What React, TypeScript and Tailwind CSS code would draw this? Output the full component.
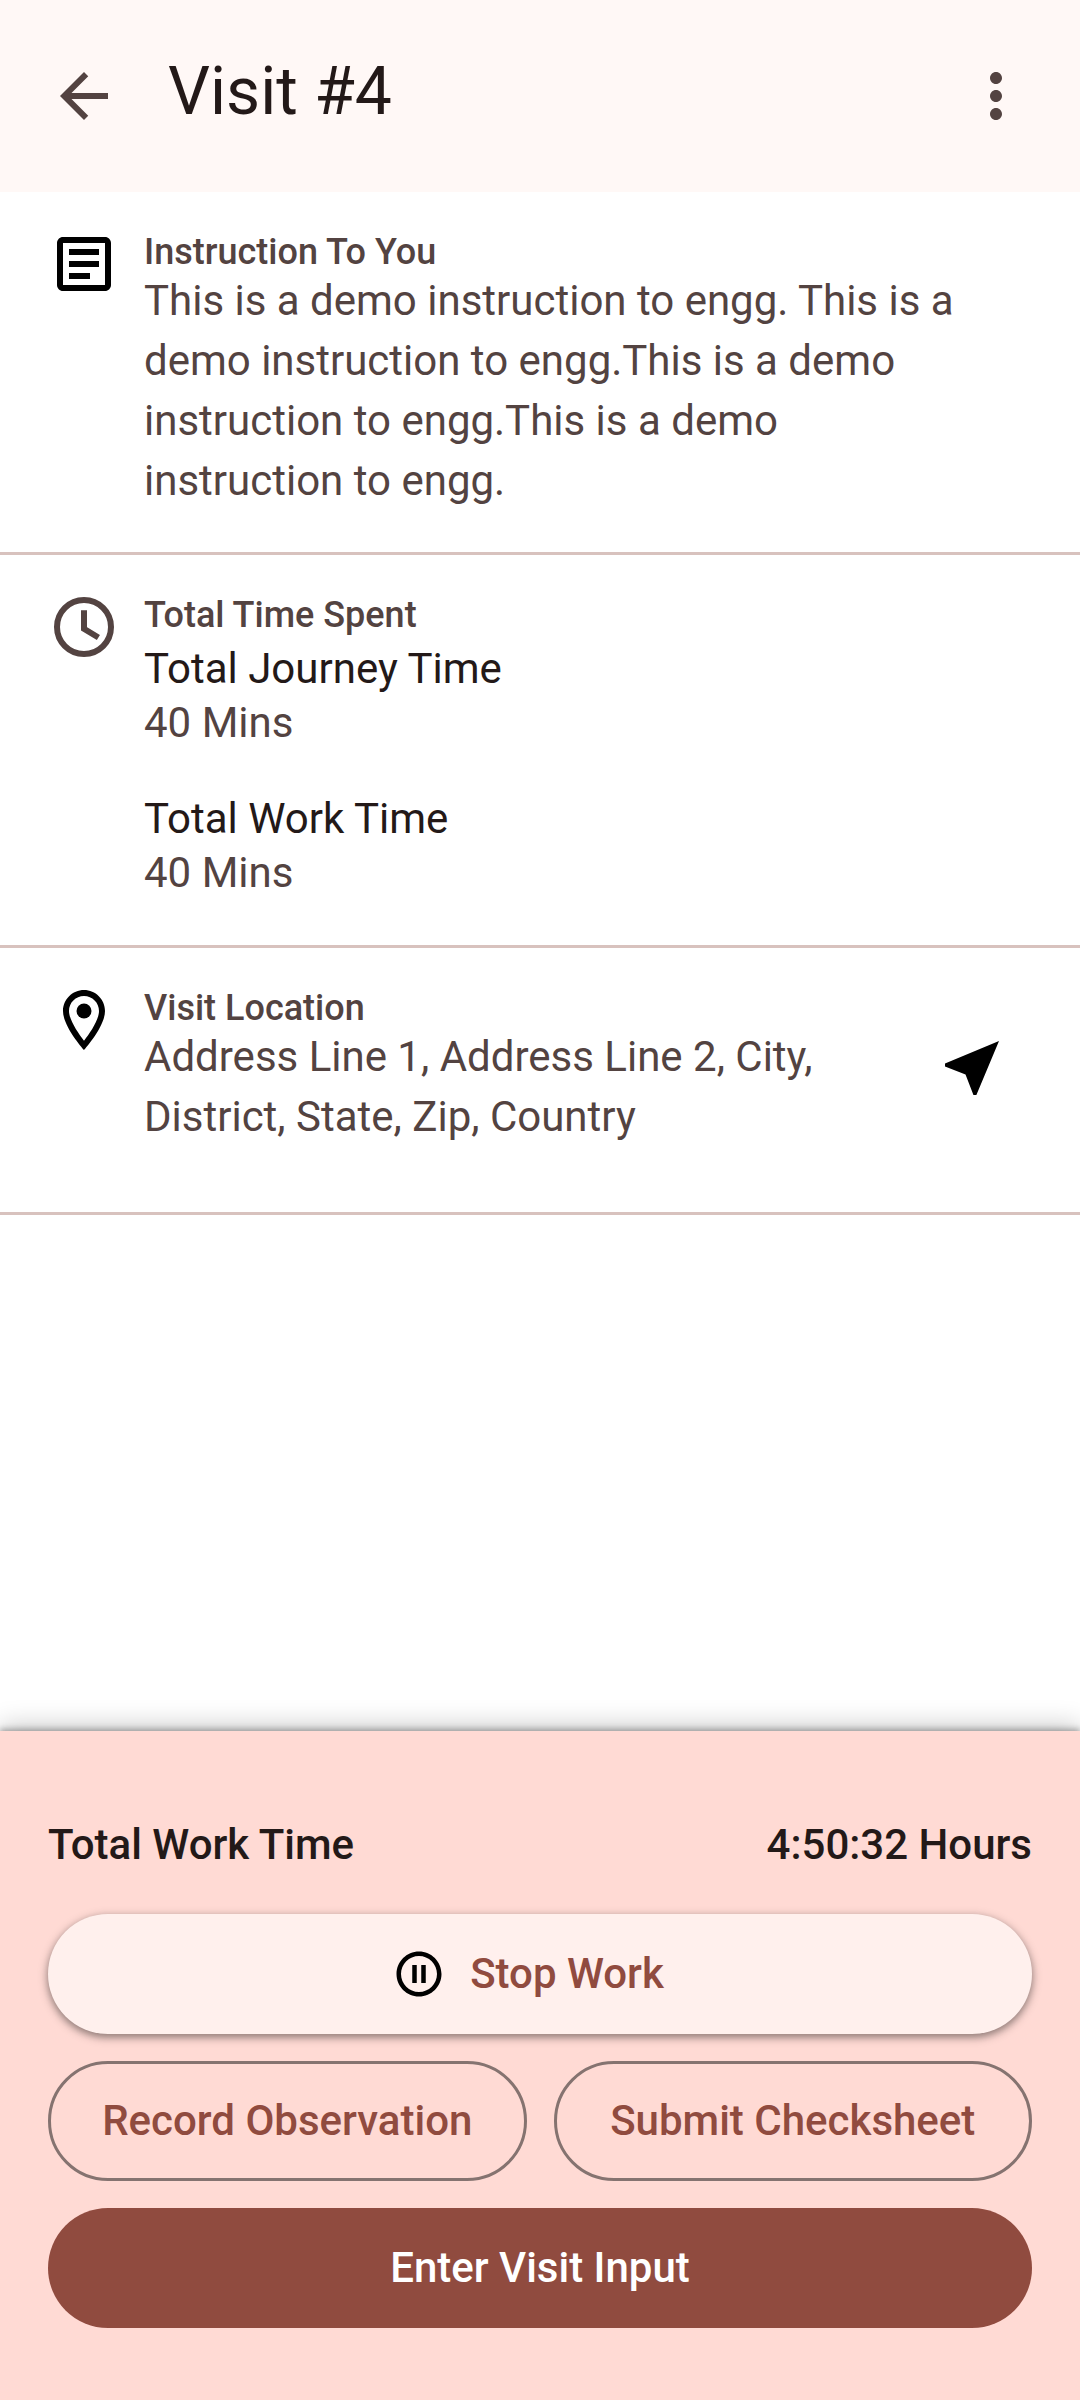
import type { ReactNode } from 'react';
import {
  MdArrowBack,
  MdMoreVert,
  MdNearMe,
  MdOutlineArticle,
  MdOutlineLocationOn,
  MdPauseCircleOutline,
} from 'react-icons/md';

interface DetailRowProps {
  icon: ReactNode;
  title: string;
  action?: ReactNode;
  children: ReactNode;
}

interface TimeEntry {
  label: string;
  value: string;
}

const timeEntries: TimeEntry[] = [
  { label: 'Total Journey Time', value: '40 Mins' },
  { label: 'Total Work Time', value: '40 Mins' },
];

function ClockIcon() {
  return (
    <svg viewBox="0 0 24 24" className="size-[72px] text-[#534341]" fill="none" stroke="currentColor" strokeWidth="2" aria-hidden="true">
      <circle cx="12" cy="12" r="9" />
      <path d="M12 6.4v6.2l4.8 2.9" />
    </svg>
  );
}

function DetailRow({ icon, title, action, children }: DetailRowProps) {
  return (
    <section className="flex min-h-[267px] border-b-3 border-[#d8c2be] px-12 pt-9 pb-[41px]">
      <div className="shrink-0">{icon}</div>
      <div className="min-w-0 flex-1 pt-[5px] pl-6">
        <h2 className="text-[36px] leading-[38px] font-medium text-[#534341]">{title}</h2>
        {children}
      </div>
      {action}
    </section>
  );
}

export default function App() {
  return (
    <div className="flex min-h-screen flex-col bg-white font-['Roboto',sans-serif] text-[#231918]">
      <header className="flex items-start bg-[#fff8f6] px-12 py-[60px]">
        <button type="button" aria-label="Back">
          <MdArrowBack className="size-[72px] text-[#534341]" />
        </button>
        <h1 className="flex-1 pl-12 text-[66px] leading-[64px]">Visit #4</h1>
        <button type="button" aria-label="More options">
          <MdMoreVert className="size-[72px] text-[#534341]" />
        </button>
      </header>

      <main className="flex-1">
        <DetailRow icon={<MdOutlineArticle className="size-[72px] text-black" />} title="Instruction To You">
          <p className="pr-14 text-[42px] leading-[60px] text-[#534341]">
            This is a demo instruction to engg. This is a demo instruction to engg.This is a demo instruction to engg.This is a demo instruction to engg.
          </p>
        </DetailRow>

        <DetailRow icon={<ClockIcon />} title="Total Time Spent">
          <dl className="flex flex-col gap-[42px] pt-2 pb-1">
            {timeEntries.map((entry) => (
              <div key={entry.label} className="text-[42px] leading-[54px]">
                <dt>{entry.label}</dt>
                <dd className="text-[#534341]">{entry.value}</dd>
              </div>
            ))}
          </dl>
        </DetailRow>

        <DetailRow
          icon={<MdOutlineLocationOn className="size-[72px] text-black" />}
          title="Visit Location"
          action={
            <button type="button" aria-label="Navigate" className="mt-6 self-start p-6">
              <MdNearMe className="size-[72px] text-black" />
            </button>
          }
        >
          <p className="text-[42px] leading-[60px] text-[#534341]">
            Address Line 1, Address Line 2, City, District, State, Zip, Country
          </p>
        </DetailRow>
      </main>

      {/* Work panel */}
      <footer className="bg-[#ffdad4] px-12 pt-[84px] pb-[72px] shadow-[0_-2px_6px_rgba(0,0,0,0.3),0_-6px_24px_rgba(0,0,0,0.2)]">
        <div className="flex items-center justify-between text-[42px] leading-[60px] font-medium">
          <span>Total Work Time</span>
          <span>4:50:32 Hours</span>
        </div>
        <div className="mt-[39px] grid grid-cols-2 gap-[27px] text-[42px] leading-[60px] font-medium text-[#904b3f]">
          <button
            type="button"
            className="col-span-2 flex h-[120px] items-center justify-center gap-6 rounded-full bg-[#fff0ed] pr-6 shadow-[0_3px_6px_rgba(0,0,0,0.3),0_3px_9px_3px_rgba(0,0,0,0.15)]"
          >
            <MdPauseCircleOutline className="size-[54px] text-black" />
            Stop Work
          </button>
          <button type="button" className="h-[120px] rounded-full border-3 border-[#857370]">
            Record Observation
          </button>
          <button type="button" className="h-[120px] rounded-full border-3 border-[#857370]">
            Submit Checksheet
          </button>
          <button type="button" className="col-span-2 h-[120px] rounded-full bg-[#904b3f] text-white">
            Enter Visit Input
          </button>
        </div>
      </footer>
    </div>
  );
}
